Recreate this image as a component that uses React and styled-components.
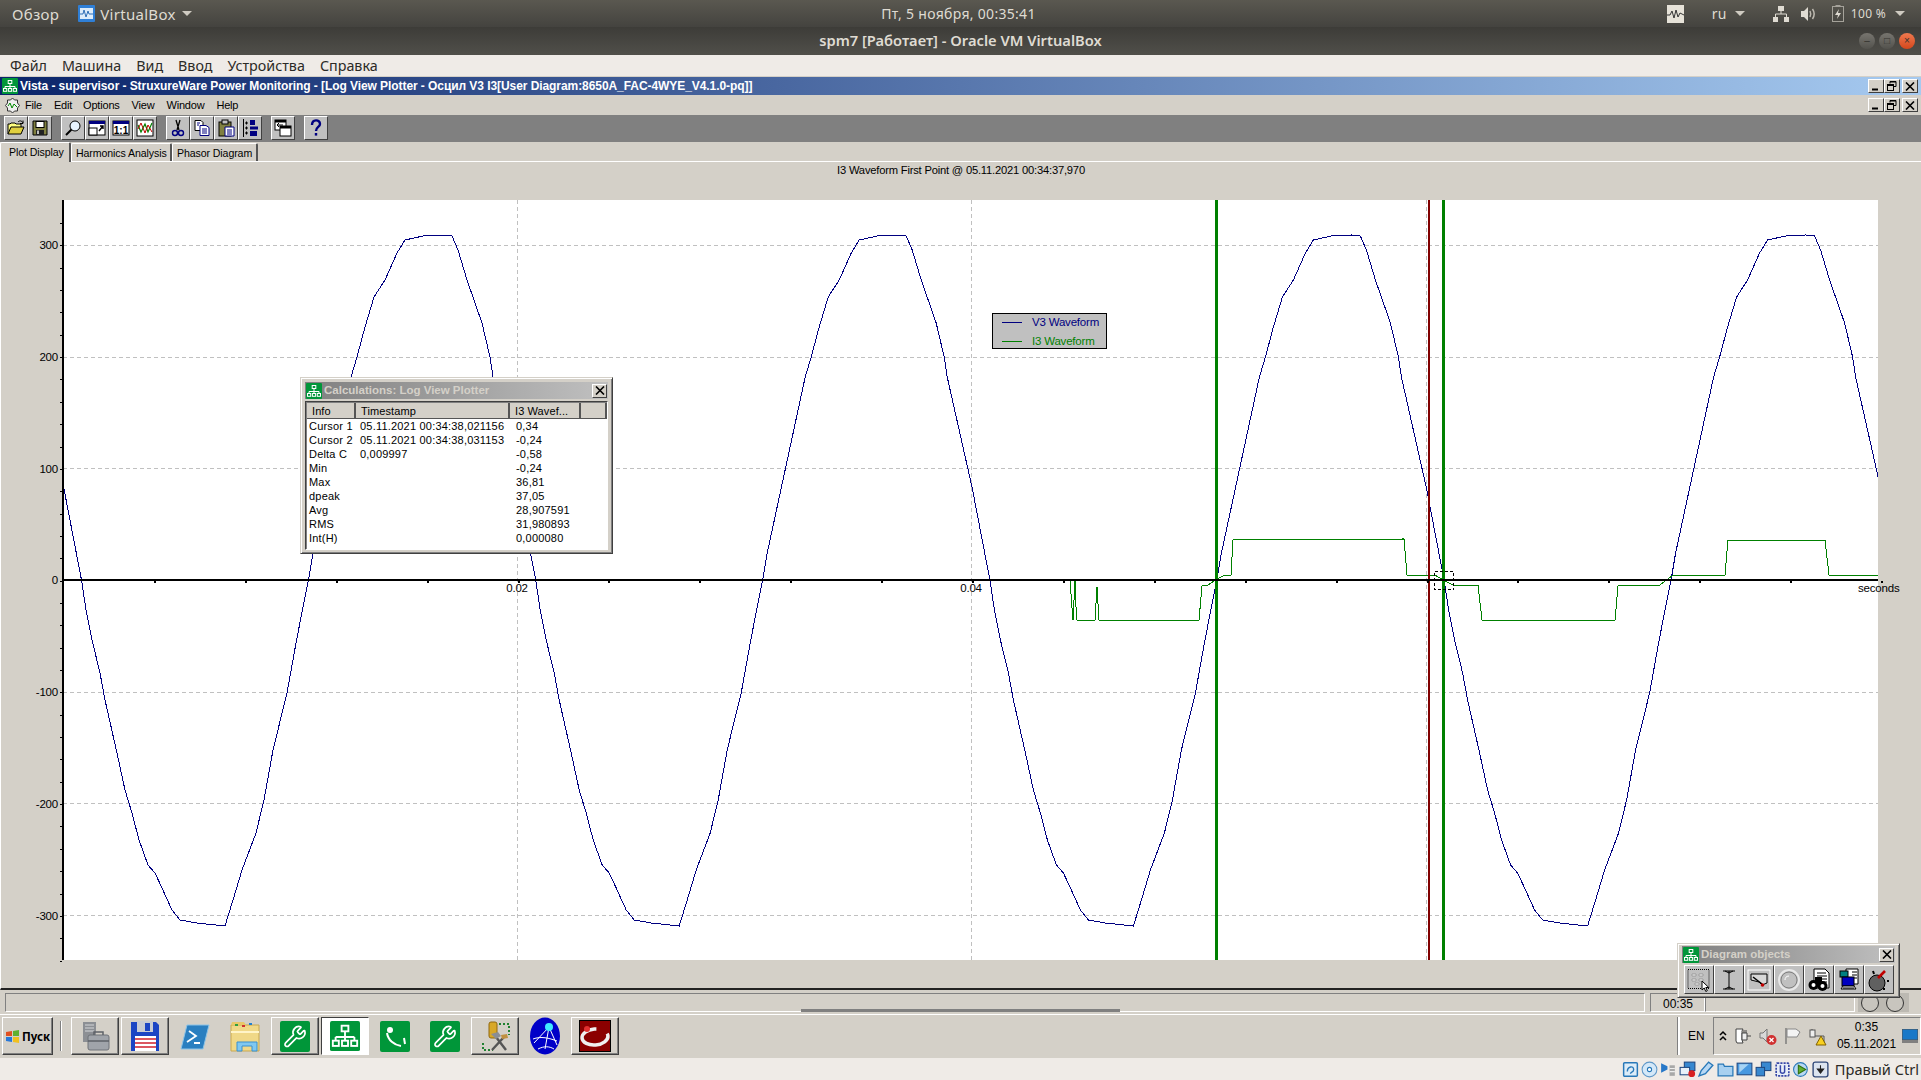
import React from "react";
import styled, { createGlobalStyle } from "styled-components";
import { Wrench } from "lucide-react";

const GlobalStyle = createGlobalStyle`
  html, body {
    margin: 0;
    padding: 0;
    background: #d4d0c8;
    overflow: hidden;
  }
  * { box-sizing: border-box; }
`;

const WIN_FONT = `"Liberation Sans", Arial, sans-serif`;
const UBUNTU_FONT = `"Noto Sans", "Open Sans", sans-serif`;

const Page = styled.div`
  position: relative;
  width: 1921px;
  height: 1080px;
  overflow: hidden;
  display: flex;
  flex-direction: column;
  font-family: ${WIN_FONT};
  font-size: 11px;
  color: #000;
`;

/* ---------- ubuntu panel ---------- */
const TopBar = styled.div`
  height: 27px;
  padding: 0 16px 0 12px;
  display: grid;
  grid-template-columns: 1fr auto 1fr;
  align-items: center;
  background: linear-gradient(#5a5850, #44433f);
  color: #dfdbd2;
  font-family: ${UBUNTU_FONT};
  font-size: 14px;
  letter-spacing: 0.3px;
`;
const TopLeft = styled.div`
  display: flex;
  align-items: center;
  font-size: 15px;
`;
const AppName = styled.span`
  margin: 0 6px 0 5px;
`;
const Overview = styled.span`
  margin-right: 19px;
`;
const TopRight = styled.div`
  display: flex;
  justify-content: flex-end;
  align-items: center;
`;
const Caret = styled.i`
  display: block;
  width: 0;
  height: 0;
  border: 5px solid transparent;
  border-top: 5px solid #cfcbc2;
  border-bottom: 0;
  margin-left: ${(p) => p.$left || 0}px;
`;
const TrayLabel = styled.span`
  margin-left: ${(p) => p.$left || 0}px;
  font-size: ${(p) => p.$size || 13}px;
`;
const TrayGlyph = styled.svg`
  display: block;
  margin-left: ${(p) => p.$left || 0}px;
`;

const VmTitle = styled.div`
  height: 28px;
  padding-right: 6px;
  display: flex;
  justify-content: flex-end;
  align-items: center;
  gap: 4px;
  position: relative;
  background: linear-gradient(#3d3c38, #504f4a);
`;
const VmTitleText = styled.span`
  position: absolute;
  left: 0;
  right: 0;
  top: 3px;
  text-align: center;
  color: #dfdbd2;
  font-family: ${UBUNTU_FONT};
  font-weight: 600;
  font-size: 14.7px;
`;
const RoundBtn = styled.span`
  width: 16px;
  height: 16px;
  border-radius: 50%;
  display: flex;
  align-items: center;
  justify-content: center;
  background: ${(p) =>
    p.$close
      ? "linear-gradient(#f0794f, #d4471c)"
      : "linear-gradient(#77756f, #53524d)"};
  color: #33322e;
  font-size: 10px;
  line-height: 1;
`;

const VmMenu = styled.div`
  height: 22px;
  padding-left: 10px;
  display: flex;
  align-items: center;
  gap: 15px;
  background: #efebe7;
  color: #2b2a26;
  font-family: ${UBUNTU_FONT};
  font-size: 14.3px;
  border-bottom: 1px solid #d4d0c8;
`;

/* ---------- guest window ---------- */
const MdiTitle = styled.div`
  height: 18px;
  padding: 0 3px 0 2px;
  display: flex;
  align-items: center;
  background: linear-gradient(90deg, #0a246a, #a6caf0);
  color: #fff;
  font-weight: 700;
  font-size: 12px;
  letter-spacing: -0.07px;
`;
const MdiTitleText = styled.span`
  margin-left: 2px;
  flex: 1;
  white-space: nowrap;
`;
const CaptionBtns = styled.div`
  display: flex;
  align-items: center;
`;
const CaptionBtn = styled.span`
  width: 16px;
  height: 14px;
  margin-left: ${(p) => p.$left || 0}px;
  display: flex;
  align-items: center;
  justify-content: center;
  background: #d4d0c8;
  border: 1px solid;
  border-color: #fff #404040 #404040 #fff;
`;

const MdiMenu = styled.div`
  height: 20px;
  padding: 0 3px 0 4px;
  display: flex;
  align-items: center;
  background: #d4d0c8;
`;
const MenuItem = styled.span`
  margin-left: ${(p) => p.$left}px;
  font-size: 11px;
  letter-spacing: -0.2px;
`;
const MenuSpacer = styled.span`
  flex: 1;
`;

const ToolBar = styled.div`
  height: 27px;
  padding: 1px 0 0 4px;
  display: flex;
  align-items: flex-start;
  background: #808080;
`;
const ToolBtn = styled.span`
  width: 24px;
  height: 24px;
  margin-left: ${(p) => p.$left || 0}px;
  display: flex;
  align-items: center;
  justify-content: center;
  background: #c0c0c0;
  border: 1px solid;
  border-color: #fff #404040 #404040 #fff;
`;

const TabRow = styled.div`
  height: 20px;
  display: flex;
  align-items: flex-end;
  background: #d4d0c8;
  border-bottom: 1px solid #fff;
  position: relative;
  z-index: 1;
`;
const Tab = styled.span`
  width: ${(p) => p.$width}px;
  height: ${(p) => (p.$active ? 20 : 18)}px;
  margin-bottom: ${(p) => (p.$active ? -1 : 0)}px;
  padding: ${(p) => (p.$active ? "3px 0 0 8px" : "3px 0 0 4px")};
  background: #d4d0c8;
  border-top: 1px solid #fff;
  border-left: 1px solid #fff;
  border-right: 2px solid #555;
  border-radius: 2px 2px 0 0;
  white-space: nowrap;
  font-size: 10.6px;
  letter-spacing: -0.1px;
`;

const PlotPanel = styled.div`
  position: relative;
  height: 828px;
  background: #d4d0c8;
  border-left: 1px solid #fff;
  border-bottom: 2px solid #222;
  display: flex;
  flex-direction: column;
`;
const PlotCaption = styled.div`
  height: 38px;
  padding-top: 2px;
  text-align: center;
  font-size: 11.2px;
  letter-spacing: -0.2px;
`;
const ChartSvg = styled.svg`
  display: block;
  margin-left: -1px;
  flex: none;
`;
const AxisText = styled.text`
  font-family: ${WIN_FONT};
  font-size: 11.5px;
  letter-spacing: -0.2px;
  fill: #000;
`;

const Legend = styled.div`
  position: absolute;
  left: 991px;
  top: 151px;
  width: 115px;
  height: 36px;
  padding: 0 0 0 9px;
  background: #c0c0c0;
  border: 1px solid #000;
`;
const LegendRow = styled.div`
  height: 16px;
  margin-bottom: 3px;
  display: flex;
  align-items: center;
  gap: 10px;
  color: ${(p) => p.$color};
  font-size: 11.5px;
  letter-spacing: -0.2px;
`;
const LegendLine = styled.i`
  display: block;
  width: 20px;
  height: 1px;
  background: ${(p) => p.$color};
`;

/* ---------- floating tool windows ---------- */
const FloatWindow = styled.div`
  position: absolute;
  z-index: 2;
  padding: 3px;
  background: #d4d0c8;
  border: 1px solid;
  border-color: #d4d0c8 #404040 #404040 #d4d0c8;
  box-shadow: inset 1px 1px #fff, inset -1px -1px #808080;
`;
const CalcWindow = styled(FloatWindow)`
  left: 300px;
  top: 377px;
  width: 313px;
  height: 177px;
`;
const DiagramWindow = styled(FloatWindow)`
  left: 1677px;
  top: 943px;
  width: 223px;
  height: 55px;
  padding-top: 1px;
`;
const FloatTitle = styled.div`
  height: 17px;
  margin: 1px 1px 0;
  padding: 0 1px;
  display: flex;
  align-items: center;
  gap: 2px;
  background: linear-gradient(90deg, #808080, #c0c0c0);
  color: #d4d0c8;
  font-weight: 700;
  font-size: 11.5px;
`;
const FloatTitleText = styled.span`
  flex: 1;
  padding-bottom: 1px;
`;
const FloatClose = styled.span`
  width: 15px;
  height: 14px;
  display: flex;
  align-items: center;
  justify-content: center;
  background: #d4d0c8;
  border: 1px solid;
  border-color: #fff #404040 #404040 #fff;
`;
const CalcBody = styled.div`
  margin: 2px 1px 0;
  height: 149px;
  background: #fff;
  border: 1px solid;
  border-color: #404040 #fff #fff #404040;
  box-shadow: inset 1px 1px #808080;
`;
const CalcHead = styled.div`
  display: grid;
  grid-template-columns: 49px 154px 71px 1fr;
  height: 16px;
  margin: 1px 0 0 1px;
`;
const CalcHeadCell = styled.span`
  padding: 2px 0 0 5px;
  background: #d4d0c8;
  border-right: 2px solid #555;
  border-bottom: 1px solid #555;
  white-space: nowrap;
  letter-spacing: 0.1px;
`;
const CalcRow = styled.div`
  display: grid;
  grid-template-columns: 51px 156px 1fr;
  height: 14px;
  line-height: 14px;
  padding-left: 3px;
  white-space: nowrap;
`;
const CalcCell = styled.span`
  letter-spacing: 0.2px;
`;
const DiagramButtons = styled.div`
  display: flex;
  margin: 2px 0 0 3px;
`;
const DiagramBtn = styled.span`
  width: 30px;
  height: 29px;
  display: flex;
  align-items: center;
  justify-content: center;
  background: #c0c0c0;
  border: 1px solid;
  border-color: #fff #404040 #404040 #fff;
`;

/* ---------- status + taskbar ---------- */
const StatusRow = styled.div`
  height: 25px;
  padding: 3px 0 0 5px;
  display: flex;
  align-items: flex-start;
  background: #d4d0c8;
  border-bottom: 1px solid #fff;
`;
const StatusField = styled.div`
  position: relative;
  width: ${(p) => p.$width}px;
  height: 19px;
  margin-left: ${(p) => p.$left || 0}px;
  padding: 3px 0 0 12px;
  border: 1px solid;
  border-color: #808080 #fff #fff #808080;
  font-size: 12px;
`;
const ScrollMark = styled.i`
  position: absolute;
  left: 795px;
  right: 0;
  width: 319px;
  bottom: -1px;
  height: 3px;
  background: #808080;
`;
const DotBox = styled.div`
  width: 51px;
  height: 19px;
  margin-left: 3px;
  padding-left: 3px;
  display: flex;
  gap: 7px;
  align-items: center;
  background: #bcb9b2;
  overflow: hidden;
`;
const Dot = styled.i`
  display: block;
  flex: none;
  width: 18px;
  height: 18px;
  border-radius: 50%;
  background: #c8c5be;
  border: 1px solid #333;
`;

const TaskBar = styled.div`
  height: 43px;
  padding: 2px 0 0 2px;
  display: flex;
  align-items: flex-start;
  background: #d4d0c8;
`;
const StartBtn = styled.span`
  width: 51px;
  height: 38px;
  display: flex;
  align-items: center;
  gap: 2px;
  padding-left: 2px;
  background: #d4d0c8;
  border: 1px solid;
  border-color: #fff #404040 #404040 #fff;
  box-shadow: inset -1px -1px #808080;
  font-family: ${UBUNTU_FONT};
  font-weight: 700;
  font-size: 11.5px;
`;
const TaskSep = styled.i`
  display: block;
  width: 2px;
  height: 30px;
  margin: 4px 9px 0 7px;
  background: #fff;
  border-left: 1px solid #808080;
`;
const TaskBtn = styled.span`
  width: 48px;
  height: 38px;
  margin-right: 2px;
  display: flex;
  align-items: center;
  justify-content: center;
  border: 1px solid;
  border-color: ${(p) =>
    p.$raised
      ? "#fff #404040 #404040 #fff"
      : p.$active
      ? "#404040 #fff #fff #404040"
      : "transparent"};
  background: ${(p) => (p.$active ? "#fff" : "transparent")};
  box-shadow: ${(p) => (p.$raised ? "inset -1px -1px #808080" : "none")};
`;
const TaskRight = styled.div`
  margin-left: auto;
  display: flex;
  align-items: flex-start;
`;
const LangBox = styled.div`
  width: 35px;
  height: 38px;
  display: flex;
  align-items: center;
  padding-left: 8px;
  border-left: 2px solid #fff;
  box-shadow: -1px 0 #808080;
  font-size: 12px;
`;
const TrayBox = styled.div`
  width: 208px;
  height: 38px;
  padding-left: 5px;
  display: flex;
  align-items: center;
  border: 1px solid;
  border-color: #808080 #fff #fff #808080;
`;
const TrayIcons = styled.div`
  display: flex;
  align-items: center;
  gap: 7px;
  width: 114px;
`;
const Clock = styled.div`
  width: 67px;
  text-align: center;
  font-size: 12px;
  line-height: 17px;
`;
const DesktopGlyph = styled.svg`
  margin-left: 2px;
`;

const VboxBar = styled.div`
  flex: 1;
  padding: 0 2px 0 0;
  display: flex;
  justify-content: flex-end;
  align-items: center;
  gap: 2px;
  background: #efebe7;
`;
const HostKey = styled.span`
  margin-left: 4px;
  font-family: ${UBUNTU_FONT};
  font-size: 14.6px;
  color: #2b2a26;
`;

/* ---------- small drawings ---------- */
const OrgIcon = ({ size = 16 }) => (
  <svg width={size} height={size} viewBox="0 0 16 16">
    <rect width="16" height="16" rx="1" fill="#009639" />
    <g fill="none" stroke="#fff" strokeWidth="1">
      <rect x="6.2" y="2.5" width="3.6" height="3" />
      <path d="M8 5.5v3M3 8.5h10M3 8.5v2M13 8.5v2M8 8.5v2" />
      <rect x="1.5" y="10.5" width="3.2" height="2.8" />
      <rect x="6.4" y="10.5" width="3.2" height="2.8" />
      <rect x="11.3" y="10.5" width="3.2" height="2.8" />
    </g>
  </svg>
);
const CloseX = () => (
  <svg width="10" height="9" viewBox="0 0 10 9">
    <path d="M1 0.5l8 8M9 0.5l-8 8" stroke="#000" strokeWidth="1.6" />
  </svg>
);
const MinGlyph = () => (
  <svg width="10" height="9" viewBox="0 0 10 9">
    <path d="M1 7.5h6" stroke="#000" strokeWidth="2" />
  </svg>
);
const RestoreGlyph = () => (
  <svg width="10" height="10" viewBox="0 0 10 10" fill="none" stroke="#000">
    <path d="M3 2.5v-2h6v5h-2" />
    <path d="M3 1h6" />
    <rect x="0.5" y="3.5" width="6" height="6" />
    <path d="M0.5 4.5h6" />
  </svg>
);
const WindowCaption = () => (
  <CaptionBtns>
    <CaptionBtn><MinGlyph /></CaptionBtn>
    <CaptionBtn><RestoreGlyph /></CaptionBtn>
    <CaptionBtn $left={2}><CloseX /></CaptionBtn>
  </CaptionBtns>
);

const tb = { width: 18, height: 18, viewBox: "0 0 18 18" };
const toolIcons = [
  <svg {...tb}>
    <path d="M1 15V5h2l1-1h4l1 1h5v3" fill="#ffff80" stroke="#000" />
    <path d="M1 15l3-7h13l-3 7z" fill="#e0d040" stroke="#000" />
    <path d="M11 3c2-2 4-1 5 1M16 1.500v3h-3" fill="none" stroke="#000" />
  </svg>,
  <svg {...tb}>
    <path d="M2 2h14v14H2z" fill="#808040" stroke="#000" />
    <rect x="5" y="2.500" width="8" height="6" fill="#fff" stroke="#000" />
    <rect x="5" y="11" width="8" height="5" fill="#222" />
    <rect x="6" y="11.500" width="2" height="3.500" fill="#c0c0c0" />
  </svg>,
  <svg {...tb}>
    <circle cx="11" cy="7" r="5" fill="#e8f4ff" stroke="#000" />
    <path d="M7.500 10.500L2 16" stroke="#000" strokeWidth="2" />
  </svg>,
  <svg {...tb}>
    <rect x="1" y="2" width="16" height="14" fill="#fff" stroke="#000" />
    <rect x="1" y="2" width="16" height="3" fill="#000080" />
    <rect x="1" y="9" width="8" height="7" fill="#fff" stroke="#000" />
    <path d="M11 12l4-5M12 7h3v3" stroke="#000" fill="none" strokeWidth="1.400" />
  </svg>,
  <svg {...tb}>
    <rect x="1" y="2" width="16" height="14" fill="#fff" stroke="#000" />
    <rect x="1" y="2" width="16" height="3" fill="#000080" />
    <text x="9" y="14.500" textAnchor="middle" fontSize="10" fontWeight="700" fontFamily={WIN_FONT}>1:1</text>
  </svg>,
  <svg {...tb}>
    <rect x="1" y="1" width="16" height="16" fill="#fff" stroke="#000" />
    <path d="M2 6l3 7 4-8 3 8 4-9" fill="none" stroke="#008000" strokeWidth="1.200" />
    <path d="M2 10l3-6 4 10 3-8 4 7" fill="none" stroke="#c00000" />
  </svg>,
  <svg {...tb}>
    <path d="M7 1l3 10M11 1l-3 10" stroke="#000" strokeWidth="1.300" />
    <circle cx="6" cy="14" r="2.500" fill="none" stroke="#000080" strokeWidth="1.400" />
    <circle cx="12" cy="14" r="2.500" fill="none" stroke="#000080" strokeWidth="1.400" />
  </svg>,
  <svg {...tb}>
    <path d="M2 1.500h6l2 2v8H2z" fill="#fff" stroke="#000" />
    <path d="M7 6.500h6l3 2v8H7z" fill="#fff" stroke="#000080" />
    <path d="M9 10h5M9 12h5M9 14h5M4 4h3M4 6h2" stroke="#000080" />
  </svg>,
  <svg {...tb}>
    <rect x="2" y="3" width="12" height="14" fill="#808040" stroke="#000" />
    <rect x="5" y="1" width="6" height="4" fill="#c0c0c0" stroke="#000" />
    <path d="M8 8h9v9H8z" fill="#fff" stroke="#000080" />
    <path d="M10 11h5M10 13h5M10 15h5" stroke="#000080" />
  </svg>,
  <svg {...tb}>
    <path d="M2.500 0v18" stroke="#000" />
    <path d="M4 4h3M4 9h3M4 14h3M5.500 2.500v3M5.500 7.500v3M5.500 12.500v3" stroke="#000" />
    <rect x="9" y="1" width="5" height="5" fill="#000080" />
    <rect x="9" y="7.500" width="8" height="3" fill="#000080" />
    <rect x="9" y="12" width="7" height="5" fill="#000080" />
  </svg>,
  <svg {...tb}>
    <rect x="1" y="1" width="11" height="10" fill="#fff" stroke="#000" />
    <rect x="1" y="1" width="11" height="2.500" fill="#000" />
    <rect x="6" y="7" width="11" height="10" fill="#fff" stroke="#000" />
    <rect x="6" y="7" width="11" height="2.500" fill="#000" />
    <path d="M3 6h6M3 6l2-2M3 6l2 2" stroke="#000" fill="none" />
  </svg>,
  <svg {...tb}>
    <path d="M5 6c0-6 8-6 8-1 0 3-4 3-4 7" fill="none" stroke="#000080" strokeWidth="2.400" />
    <rect x="7.800" y="14" width="2.400" height="2.600" fill="#000080" />
  </svg>,
];
const toolLefts = [0, 0, 9, 0, 0, 0, 9, 0, 0, 0, 9, 9];

const dg = { width: 24, height: 24, viewBox: "0 0 24 24" };
const diagramIcons = [
  <svg {...dg}>
    <rect x="1" y="1.500" width="21" height="19" fill="none" stroke="#000" strokeDasharray="1 1" />
    <path d="M5 6h4v2H5zM12 6h4v2h-4zM5 11h4v2H5zM12 11h4v2h-4zM8 15h4v2H8z" fill="#e8e8e8" stroke="#808080" strokeWidth="0.600" />
    <path d="M15 13v9l2.200-2 1.600 3.500 1.500-.8-1.500-3.200h3z" fill="#fff" stroke="#000" />
  </svg>,
  <svg {...dg}>
    <path d="M6 3h12M6 21h12M12 3v18M8 3l4 2 4-2M8 21l4-2 4 2" fill="none" stroke="#000" />
  </svg>,
  <svg {...dg}>
    <rect x="1" y="2" width="22" height="20" fill="none" stroke="#fff" />
    <path d="M4 6h16v9l-5 2-3-3-8-2z" fill="#d8d8d8" stroke="#000" />
    <path d="M6 9l9 7" stroke="#000" strokeWidth="1.500" />
    <circle cx="15.500" cy="17" r="1.800" fill="#c00000" />
  </svg>,
  <svg {...dg}>
    <circle cx="12" cy="12" r="10" fill="none" stroke="#e8e8e8" strokeWidth="2" />
    <circle cx="12" cy="12" r="8" fill="none" stroke="#808080" />
    <path d="M8 12c0-2 1-4 4-4" fill="none" stroke="#fff" />
  </svg>,
  <svg {...dg}>
    <path d="M7 1h11l4 4v15H7z" fill="#fff" stroke="#000" />
    <path d="M10 5h9M10 8h10M10 11h10M10 14h10M10 17h10" stroke="#000" />
    <circle cx="6.500" cy="17" r="5" fill="#000" />
    <circle cx="15.500" cy="18" r="5" fill="#000" />
    <rect x="8" y="9" width="7" height="7" fill="#000" />
    <circle cx="6.500" cy="17" r="2" fill="#fff" />
    <circle cx="15.500" cy="18" r="2" fill="#fff" />
  </svg>,
  <svg {...dg}>
    <path d="M9 1h12v15H9z" fill="#fff" stroke="#000" />
    <path d="M15 4h5M15 7h5M15 10h5" stroke="#000" />
    <rect x="3" y="3" width="8" height="6" fill="#008080" stroke="#000" />
    <rect x="5" y="9" width="12" height="9" fill="#0000c0" stroke="#000" />
    <path d="M4 21l2-3h11l2 3zM6 20h11" fill="#fff" stroke="#000" />
  </svg>,
  <svg {...dg}>
    <circle cx="10" cy="15" r="8" fill="#606060" stroke="#000" />
    <path d="M11 10l7-7" stroke="#c00000" strokeWidth="2.600" />
    <path d="M6 3l1 3M20 13h2M16 21h2" stroke="#000" strokeWidth="2" />
  </svg>,
];

const ti = { width: 30, height: 31, viewBox: "0 0 30 31" };
const WrenchTile = () => (
  <svg {...ti}>
    <rect width="30" height="31" rx="2" fill="#009639" />
    <Wrench x="3" y="3.500" width="24" height="24" stroke="#fff" strokeWidth="1.700" />
  </svg>
);
const taskButtons = [
  {
    raised: true,
    icon: (
      <svg {...ti}>
        <path d="M3 1h13v20H3z" fill="#8c8f94" />
        <path d="M5 4h9M5 7h9M5 10h9" stroke="#d5d7da" />
        <rect x="8" y="14" width="21" height="15" rx="2" fill="#a0a4aa" stroke="#6e7278" />
        <path d="M14 14v-3h9v3M8 20h21" fill="none" stroke="#5e6268" strokeWidth="1.500" />
      </svg>
    ),
  },
  {
    raised: true,
    icon: (
      <svg {...ti}>
        <path d="M1 1h25l3 3v26H1z" fill="#1b45c4" />
        <rect x="7" y="0" width="16" height="11" fill="#c8ccd4" />
        <rect x="15" y="2" width="5" height="8" fill="#1b45c4" />
        <rect x="5" y="15" width="21" height="15" fill="#fff" />
        <path d="M5 18h21M5 22h21M5 26h21" stroke="#d0202c" strokeWidth="1.400" />
      </svg>
    ),
  },
  {
    icon: (
      <svg {...ti}>
        <path d="M7 4h22l-6 24H1z" fill="#2a7fc0" stroke="#8cc4e8" />
        <path d="M9 10l7 5-9 6M14 22h6" fill="none" stroke="#fff" strokeWidth="1.800" />
      </svg>
    ),
  },
  {
    icon: (
      <svg {...ti}>
        <path d="M1 4h28v26H1z" fill="#f0d888" stroke="#c8a850" />
        <path d="M2 1h12l2 3H1z" fill="#e8c868" />
        <rect x="5" y="3" width="3" height="2" fill="#30a040" />
        <rect x="12" y="4" width="3" height="2" fill="#d03030" />
        <rect x="19" y="2" width="3" height="2" fill="#2080d0" />
        <path d="M1 11h28" stroke="#fff4c8" strokeWidth="2" />
        <path d="M7 30V21h20v9h-5v-5H12v5z" fill="#80c8f0" stroke="#3890d0" />
      </svg>
    ),
  },
  { raised: true, icon: <WrenchTile /> },
  { active: true, icon: <OrgIcon size={30} /> },
  {
    icon: (
      <svg {...ti}>
        <rect width="30" height="31" rx="2" fill="#009639" />
        <circle cx="10" cy="9" r="3" fill="#fff" />
        <path d="M7 12c1 7 7 12 14 13M24 17l1 6" fill="none" stroke="#fff" strokeWidth="2" />
      </svg>
    ),
  },
  { icon: <WrenchTile /> },
  {
    raised: true,
    icon: (
      <svg {...ti}>
        <rect x="9" y="1" width="8" height="16" rx="2" fill="#d8a828" stroke="#906810" />
        <path d="M19 3h10v11M3 22v7h10" fill="none" stroke="#208030" strokeDasharray="2 2" strokeWidth="2" />
        <path d="M12 29L24 16M16 16l10 13" stroke="#555" strokeWidth="2.400" />
        <path d="M11 13l7-2 3 4-5 3z" fill="#8a8e94" />
        <path d="M21 14l6-1 1 4-6 1z" fill="#c09040" />
      </svg>
    ),
  },
  {
    icon: (
      <svg width="30" height="38" viewBox="0 0 30 38">
        <ellipse cx="15" cy="19" rx="15" ry="18.500" fill="#0000c8" />
        <path d="M19 10L4 26M19 10l-4 22M19 10l8 18M3 22c8-3 16-1 24 2M8 32c6-3 11-3 16 0" fill="none" stroke="#fff" />
        <circle cx="19" cy="10" r="4" fill="#40e8ff" />
      </svg>
    ),
  },
  {
    raised: true,
    icon: (
      <svg width="32" height="32" viewBox="0 0 32 32">
        <rect x="0.500" y="0.500" width="31" height="31" fill="#8b0000" stroke="#000" />
        <ellipse cx="16" cy="17" rx="13" ry="8" fill="none" stroke="#f0f0f0" strokeWidth="3.500" strokeDasharray="52 12" transform="rotate(-5 16 17)" />
        <circle cx="8" cy="9" r="3" fill="#e03030" />
      </svg>
    ),
  },
];

const tr = { width: 18, height: 20, viewBox: "0 0 18 20" };
const trayIcons = [
  <svg width="8" height="12" viewBox="0 0 8 12">
    <path d="M1 5l3-3 3 3M1 10l3-3 3 3" fill="none" stroke="#000" strokeWidth="1.500" />
  </svg>,
  <svg {...tr}>
    <path d="M2 3h7l-1 2v9l1 3H3l-1-2z" fill="#fff" stroke="#444" />
    <path d="M8 7h5v7H8zM10 4v3M12 4v3M13 10h4" fill="#eee" stroke="#444" />
  </svg>,
  <svg {...tr}>
    <path d="M1 7h3l4-4v13l-4-4H1z" fill="#d8d8d8" stroke="#777" />
    <circle cx="12.500" cy="14" r="5" fill="#d03030" />
    <path d="M10.500 12l4 4M14.500 12l-4 4" stroke="#fff" strokeWidth="1.300" />
  </svg>,
  <svg {...tr}>
    <path d="M2 2v16" stroke="#777" strokeWidth="1.400" />
    <path d="M3 3h9l4 3-3 5H3z" fill="#f4f4f4" stroke="#888" />
  </svg>,
  <svg {...tr}>
    <path d="M3 3v7h12v8" fill="none" stroke="#555" />
    <rect x="1" y="4" width="5" height="7" fill="#eee" stroke="#555" />
    <path d="M7 19l5-9 5 9z" fill="#f8d020" stroke="#806000" />
  </svg>,
];

const vb = { width: 17, height: 19, viewBox: "0 0 16 18" };
const vboxIcons = [
  <svg {...vb}>
    <rect x="1.500" y="2.500" width="13" height="13" rx="1" fill="#dcecf8" stroke="#2878b8" strokeWidth="1.400" />
    <path d="M5 11c0-5 6-6 6-2 0 3-3 2-3 4" fill="none" stroke="#2878b8" strokeWidth="1.300" />
  </svg>,
  <svg {...vb}>
    <circle cx="8" cy="9" r="7" fill="#d4e8f8" stroke="#6098c8" />
    <circle cx="8" cy="9" r="2" fill="#fff" stroke="#2878b8" />
  </svg>,
  <svg {...vb}>
    <path d="M1 3l6 3v3l-6 3z" fill="#2878c8" />
    <rect x="9" y="5" width="5" height="10" fill="#a8a8a8" />
    <path d="M9 8h5M9 11h5" stroke="#eee" />
  </svg>,
  <svg {...vb}>
    <rect x="5" y="2" width="10" height="8" fill="#3888d0" stroke="#204880" />
    <rect x="1" y="7" width="9" height="7" fill="#e8f0f8" stroke="#204880" />
    <circle cx="12" cy="13" r="3.200" fill="#d82020" />
  </svg>,
  <svg {...vb}>
    <path d="M1 15l2-5 7-8 4 3-7 8z" fill="#b8d8f4" stroke="#2878b8" strokeWidth="1.300" />
  </svg>,
  <svg {...vb}>
    <path d="M1 15V4h5l1 2h8v9z" fill="#a8d0f0" stroke="#2878b8" strokeWidth="1.200" />
  </svg>,
  <svg {...vb}>
    <rect x="1" y="3" width="14" height="11" fill="#4898e0" stroke="#204880" />
    <path d="M3 12l9-8H3z" fill="#a8d4f4" />
  </svg>,
  <svg {...vb}>
    <rect x="6" y="2" width="9" height="8" fill="#3888d0" stroke="#204880" />
    <rect x="1" y="7" width="8" height="8" fill="#3888d0" stroke="#204880" />
  </svg>,
  <svg {...vb}>
    <rect x="2" y="3" width="12" height="12" rx="1" fill="#e8eef8" stroke="#3848a8" strokeWidth="1.600" strokeDasharray="2 1" />
    <path d="M6 5v6c0 2 4 2 4 0V5" fill="none" stroke="#3848a8" strokeWidth="1.400" />
  </svg>,
  <svg {...vb}>
    <circle cx="7" cy="9" r="6.500" fill="#b8d8f4" stroke="#2878b8" />
    <path d="M5 5l7 4-7 4z" fill="#60b030" stroke="#307010" />
  </svg>,
  <svg {...vb}>
    <rect x="1" y="2" width="14" height="14" rx="2" fill="#dce4f0" stroke="#304878" strokeWidth="1.300" />
    <path d="M8 5v4M5 8.500h6L8 12.500z" fill="#222" stroke="#222" />
  </svg>,
];

/* ---------- chart data (page pixels) ---------- */
const PERIOD = 454.2;
const waveCycle = [
  [81.5, 580], [86, 610], [92, 640], [100, 673], [105, 700], [117, 753], [125, 790], [132, 813],
  [139, 840], [148, 865], [155, 873], [162, 888], [172, 910], [180, 920], [197, 923], [225, 926],
  [233, 900], [242, 870], [256, 833], [264, 800], [273, 750], [287, 693], [296, 643], [303, 607],
  [308.5, 580], [313, 553], [332, 465], [351, 377], [357, 357], [365, 327], [374, 297], [385, 280],
  [397, 253], [405, 240], [423, 236], [443, 235], [452, 236], [458, 250], [467, 280], [482, 323],
  [490, 357], [493, 377], [518, 488],
];
const wavePoints = [-1, 0, 1, 2, 3]
  .flatMap((k) => waveCycle.map(([x, y]) => `${x + k * PERIOD},${y}`))
  .join(" ");
const currentPoints = [
  [1070, 580], [1072, 608], [1073, 620], [1075, 581], [1076, 607], [1077, 620], [1095, 620], [1097, 587],
  [1099, 620], [1199, 620], [1202, 586], [1208, 585], [1217, 579], [1223, 576], [1231, 575], [1233, 540],
  [1404, 539], [1407, 575], [1435, 575], [1443, 580], [1453, 585], [1478, 585], [1482, 620], [1615, 620],
  [1618, 586], [1660, 585], [1672, 576], [1725, 575], [1728, 540], [1825, 540], [1829, 575], [1878, 575],
]
  .map((p) => p.join(","))
  .join(" ");

const PLOT = { left: 63, right: 1878, top: 200, bottom: 960, zero: 580.5 };
const yValues = [300, 200, 100, -100, -200, -300];
const yPos = (v) => PLOT.zero - v * 1.117;
const gridX = [517, 971.5, 1426];
const minorY = Array.from({ length: 34 }, (_, i) => 223 + i * 22.35);
const minorX = Array.from({ length: 20 }, (_, i) => 63 + (i + 1) * 90.9);

const Chart = () => (
  <ChartSvg width="1921" height="788" viewBox="0 200 1921 788">
    <defs>
      <clipPath id="plot-clip">
        <rect x={PLOT.left} y={PLOT.top} width={PLOT.right - PLOT.left} height={PLOT.bottom - PLOT.top} />
      </clipPath>
    </defs>
    <rect x={PLOT.left} y={PLOT.top} width={PLOT.right - PLOT.left} height={PLOT.bottom - PLOT.top} fill="#fff" />
    <g stroke="#c0c0c0" strokeDasharray="4 3" shapeRendering="crispEdges">
      {yValues.map((v) => (
        <line key={v} x1={PLOT.left} x2={PLOT.right} y1={yPos(v)} y2={yPos(v)} />
      ))}
      {gridX.map((x) => (
        <line key={x} x1={x} x2={x} y1={PLOT.top} y2={PLOT.bottom} />
      ))}
    </g>
    <g clipPath="url(#plot-clip)" fill="none" shapeRendering="crispEdges">
      <polyline points={wavePoints} stroke="#000080" strokeWidth="1" />
      <polyline points={currentPoints} stroke="#008000" strokeWidth="1" />
    </g>
    <g shapeRendering="crispEdges">
      <rect x="1215" y={PLOT.top} width="3" height="760" fill="#008000" />
      <rect x="1442" y={PLOT.top} width="3" height="760" fill="#008000" />
      <rect x="1428" y={PLOT.top} width="2" height="760" fill="#800000" />
      <rect x="62" y={PLOT.top} width="2" height="760" fill="#000" />
      <rect x={PLOT.left} y="579" width={PLOT.right - PLOT.left} height="2" fill="#000" />
      <rect x="1434.500" y="571.500" width="19" height="18" fill="none" stroke="#000" strokeDasharray="3 2" />
      {minorY.map((y) => (
        <rect key={y} x="60" y={y} width="2" height="1" fill="#000" />
      ))}
      {minorX.map((x) => (
        <rect key={x} x={x} y="581" width="2" height="2" fill="#000" />
      ))}
    </g>
    {yValues.map((v) => (
      <AxisText key={v} x="58" y={yPos(v) + 4} textAnchor="end">{v}</AxisText>
    ))}
    <AxisText x="58" y="584" textAnchor="end">0</AxisText>
    <AxisText x="517" y="592" textAnchor="middle">0.02</AxisText>
    <AxisText x="971" y="592" textAnchor="middle">0.04</AxisText>
    <AxisText x="1858" y="592">seconds</AxisText>
  </ChartSvg>
);

const calcRows = [
  ["Cursor 1", "05.11.2021 00:34:38,021156", "0,34"],
  ["Cursor 2", "05.11.2021 00:34:38,031153", "-0,24"],
  ["Delta C", "0,009997", "-0,58"],
  ["Min", "", "-0,24"],
  ["Max", "", "36,81"],
  ["dpeak", "", "37,05"],
  ["Avg", "", "28,907591"],
  ["RMS", "", "31,980893"],
  ["Int(H)", "", "0,000080"],
];

export default function App() {
  return (
    <Page>
      <GlobalStyle />
      <TopBar>
        <TopLeft>
          <Overview>Обзор</Overview>
          <svg width="17" height="17" viewBox="0 0 17 17">
            <rect width="17" height="17" rx="1" fill="#2f7fd6" />
            <rect x="2" y="3" width="13" height="11" fill="#dcecfa" />
            <path d="M2 9h3l1-4 2 7 2-6 1 3h4" fill="none" stroke="#2f6fb6" />
          </svg>
          <AppName>VirtualBox</AppName>
          <Caret />
        </TopLeft>
        <span>Пт, 5 ноября, 00:35:41</span>
        <TopRight>
          <TrayGlyph width="17" height="18" viewBox="0 0 17 18">
            <rect width="17" height="18" fill="#e6e2d8" />
            <path d="M0 10h3l2-4 2 7 2-8 2 7 2-4 4 2" fill="none" stroke="#333" />
          </TrayGlyph>
          <TrayLabel $left={28} $size={14}>ru</TrayLabel>
          <Caret $left={8} />
          <TrayGlyph $left={28} width="16" height="16" viewBox="0 0 16 16" fill="#dfdbd2">
            <rect x="5" y="0" width="6" height="5" />
            <rect x="0" y="11" width="5" height="5" />
            <rect x="11" y="11" width="5" height="5" />
            <path d="M8 5v3M2.500 11V8h11v3" fill="none" stroke="#dfdbd2" />
          </TrayGlyph>
          <TrayGlyph $left={12} width="16" height="14" viewBox="0 0 16 14" fill="none" stroke="#bdb9b0">
            <path d="M0 4h3l4-4v14l-4-4H0z" fill="#dfdbd2" stroke="none" />
            <path d="M9 4c1 2 1 4 0 6M11.500 2c2 3 2 7 0 10" strokeWidth="1.500" />
          </TrayGlyph>
          <TrayGlyph $left={15} width="12" height="17" viewBox="0 0 12 17">
            <rect x="3.500" y="0" width="5" height="2" fill="#a5a29a" />
            <rect x="0.500" y="1.500" width="11" height="15" fill="none" stroke="#a5a29a" />
            <path d="M7 4L3 10h3l-1 4 4-6H6z" fill="#dfdbd2" />
          </TrayGlyph>
          <TrayLabel $left={7} $size={12}>100 %</TrayLabel>
          <Caret $left={9} />
        </TopRight>
      </TopBar>

      <VmTitle>
        <VmTitleText>spm7 [Работает] - Oracle VM VirtualBox</VmTitleText>
        <RoundBtn>–</RoundBtn>
        <RoundBtn>□</RoundBtn>
        <RoundBtn $close>×</RoundBtn>
      </VmTitle>

      <VmMenu>
        {["Файл", "Машина", "Вид", "Ввод", "Устройства", "Справка"].map((m) => (
          <span key={m}>{m}</span>
        ))}
      </VmMenu>

      <MdiTitle>
        <OrgIcon />
        <MdiTitleText>
          Vista - supervisor - StruxureWare Power Monitoring - [Log View Plotter - Осцил V3 I3[User Diagram:8650A_FAC-4WYE_V4.1.0-pq]]
        </MdiTitleText>
        <WindowCaption />
      </MdiTitle>

      <MdiMenu>
        <svg width="17" height="17" viewBox="0 0 17 17">
          <path d="M8.500 1l2 2h3v3l2 2.500-2 2.500v3h-3l-2 2-2-2h-3v-3l-2-2.500 2-2.500V3h3z" fill="#eee" stroke="#333" />
          <path d="M4 9l2-3 2 5 2-4 3 3" fill="none" stroke="#080" />
        </svg>
        <MenuItem $left={4}>File</MenuItem>
        <MenuItem $left={12}>Edit</MenuItem>
        <MenuItem $left={11}>Options</MenuItem>
        <MenuItem $left={12}>View</MenuItem>
        <MenuItem $left={12}>Window</MenuItem>
        <MenuItem $left={12}>Help</MenuItem>
        <MenuSpacer />
        <WindowCaption />
      </MdiMenu>

      <ToolBar>
        {toolIcons.map((icon, i) => (
          <ToolBtn key={i} $left={toolLefts[i]}>{icon}</ToolBtn>
        ))}
      </ToolBar>

      <TabRow>
        <Tab $active $width={71}>Plot Display</Tab>
        <Tab $width={101}>Harmonics Analysis</Tab>
        <Tab $width={86}>Phasor Diagram</Tab>
      </TabRow>

      <PlotPanel>
        <PlotCaption>I3 Waveform First Point @ 05.11.2021 00:34:37,970</PlotCaption>
        <Chart />
        <Legend>
          <LegendRow $color="#000080"><LegendLine $color="#000080" />V3 Waveform</LegendRow>
          <LegendRow $color="#008000"><LegendLine $color="#008000" />I3 Waveform</LegendRow>
        </Legend>
      </PlotPanel>

      <StatusRow>
        <StatusField $width={1640}>
          <ScrollMark />
        </StatusField>
        <StatusField $left={5} $width={55}>00:35</StatusField>
        <StatusField $width={150} />
        <DotBox>
          <Dot />
          <Dot />
        </DotBox>
      </StatusRow>

      <TaskBar>
        <StartBtn>
          <svg width="15" height="15" viewBox="0 0 15 15">
            <path d="M1 3l6-1v5H1z" fill="#e05020" />
            <path d="M8 2l6-1v6H8z" fill="#60b030" />
            <path d="M1 8h6v5l-6-1z" fill="#2878d8" />
            <path d="M8 8h6v6l-6-1z" fill="#f0c020" />
          </svg>
          Пуск
        </StartBtn>
        <TaskSep />
        {taskButtons.map((b, i) => (
          <TaskBtn key={i} $raised={b.raised} $active={b.active}>{b.icon}</TaskBtn>
        ))}
        <TaskRight>
          <LangBox>EN</LangBox>
          <TrayBox>
            <TrayIcons>
              {trayIcons.map((icon, i) => (
                <React.Fragment key={i}>{icon}</React.Fragment>
              ))}
            </TrayIcons>
            <Clock>
              0:35
              <br />
              05.11.2021
            </Clock>
            <DesktopGlyph width="16" height="14" viewBox="0 0 16 14">
              <rect width="16" height="11" fill="#1878c8" stroke="#505050" />
              <path d="M0 11h16v3H0z" fill="#808080" />
            </DesktopGlyph>
          </TrayBox>
        </TaskRight>
      </TaskBar>

      <VboxBar>
        {vboxIcons.map((icon, i) => (
          <React.Fragment key={i}>{icon}</React.Fragment>
        ))}
        <HostKey>Правый Ctrl</HostKey>
      </VboxBar>

      <CalcWindow>
        <FloatTitle>
          <OrgIcon />
          <FloatTitleText>Calculations: Log View Plotter</FloatTitleText>
          <FloatClose><CloseX /></FloatClose>
        </FloatTitle>
        <CalcBody>
          <CalcHead>
            <CalcHeadCell>Info</CalcHeadCell>
            <CalcHeadCell>Timestamp</CalcHeadCell>
            <CalcHeadCell>I3 Wavef...</CalcHeadCell>
            <CalcHeadCell />
          </CalcHead>
          {calcRows.map((row) => (
            <CalcRow key={row[0]}>
              {row.map((cell, i) => (
                <CalcCell key={i}>{cell}</CalcCell>
              ))}
            </CalcRow>
          ))}
        </CalcBody>
      </CalcWindow>

      <DiagramWindow>
        <FloatTitle>
          <OrgIcon />
          <FloatTitleText>Diagram objects</FloatTitleText>
          <FloatClose><CloseX /></FloatClose>
        </FloatTitle>
        <DiagramButtons>
          {diagramIcons.map((icon, i) => (
            <DiagramBtn key={i}>{icon}</DiagramBtn>
          ))}
        </DiagramButtons>
      </DiagramWindow>
    </Page>
  );
}
